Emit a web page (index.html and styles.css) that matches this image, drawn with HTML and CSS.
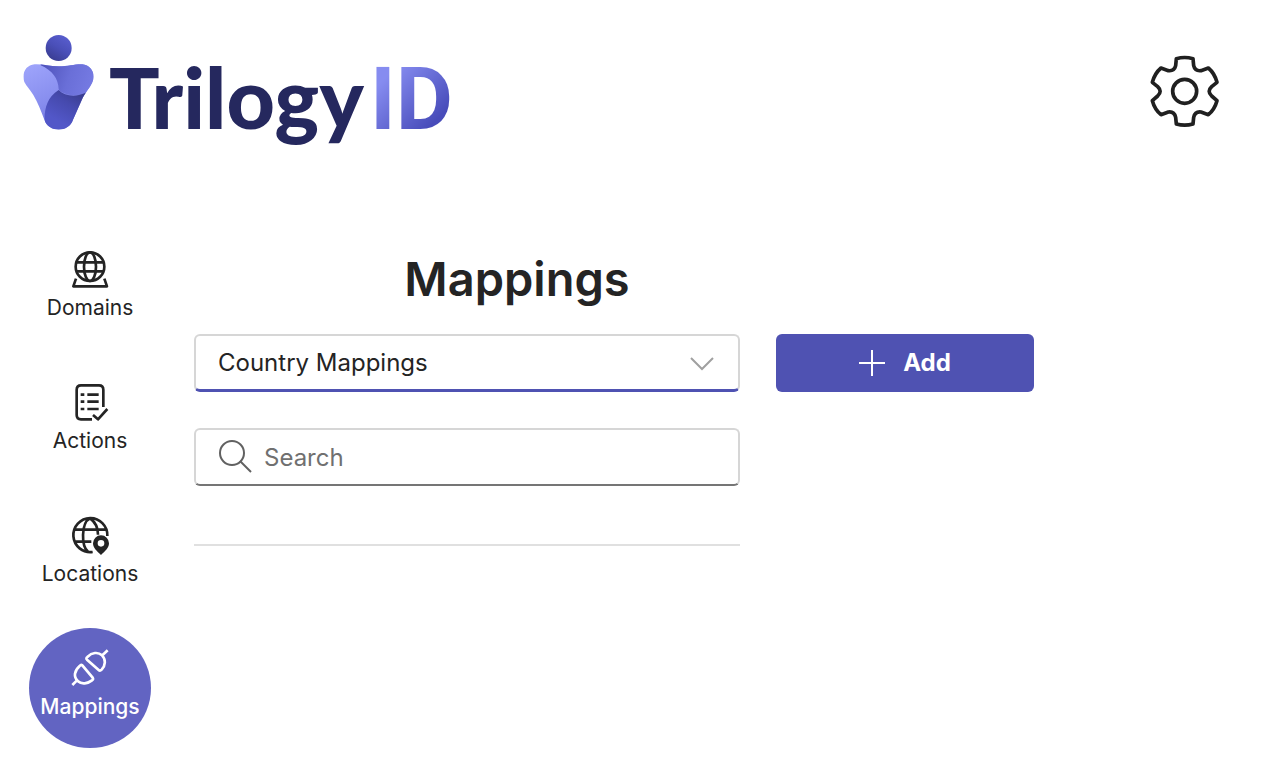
FILE: index.html
```html
<!DOCTYPE html>
<html lang="en">
<head>
<meta charset="utf-8">
<meta name="viewport" content="width=device-width, initial-scale=1">
<title>TrilogyID - Mappings</title>
<link rel="stylesheet" href="styles.css">
</head>
<body>
<header class="header">
  <a class="logo" href="#">
    <svg class="logo-mark" viewBox="36 25 219 297" aria-hidden="true">
      <defs>
        <linearGradient id="head" x1="0.8" y1="0" x2="0.2" y2="1"><stop offset="0" stop-color="#5a5fd0"/><stop offset="0.5" stop-color="#4a4fb8"/><stop offset="1" stop-color="#383b8e"/></linearGradient>
        <linearGradient id="left" x1="0.2" y1="0" x2="0.7" y2="1"><stop offset="0" stop-color="#9ea4fb"/><stop offset="0.5" stop-color="#878dee"/><stop offset="1" stop-color="#6468d4"/></linearGradient>
        <linearGradient id="right" x1="0" y1="0.4" x2="1" y2="0.6"><stop offset="0" stop-color="#5054bc"/><stop offset="0.5" stop-color="#6a6fd8"/><stop offset="1" stop-color="#777ce4"/></linearGradient>
        <linearGradient id="foot" x1="0.8" y1="0.1" x2="0.4" y2="0.8"><stop offset="0" stop-color="#363982"/><stop offset="0.5" stop-color="#464aae"/><stop offset="1" stop-color="#5257c8"/></linearGradient>
        <clipPath id="torso"><path d="M74 119C98 118 118 125 146 125C175 125 195 118 217 119C244 121 259 149 246 175C239 190 226 204 218 220L189 285C177 324 115 324 103 285C94 261 83 233 70 211C61 196 50 185 43 172C34 145 48 121 74 119Z"/></clipPath>
      </defs>
      <circle cx="146" cy="70" r="39" fill="url(#head)"/>
      <g clip-path="url(#torso)">
        <path d="M30 110H260V330H30Z" fill="url(#left)"/>
        <path d="M92 110H260V212H185C164 209 150 201 146 194C145 162 127 138 92 122Z" fill="url(#right)"/>
        <path d="M146 196C160 211 184 216 207 211C229 207 242 198 253 178V330H110C100 290 96 226 146 196Z" fill="url(#foot)"/>
      </g>
    </svg>
    <span class="logo-text">Trilogy<span class="logo-id">ID</span></span>
  </a>
  <button class="settings" type="button" aria-label="Settings">
    <svg viewBox="55 40 219 228" fill="none" stroke="#202020" stroke-width="11" stroke-linejoin="round" aria-hidden="true">
      <path d="M140 57Q165 50 190 57L192 78Q196 95 214 93L236 85Q255 101 262 128L246 141Q231 155 246 169L262 183Q255 209 236 225L214 217Q196 215 192 233L190 253Q165 260 140 253L138 233Q134 215 116 217L94 225Q75 209 68 183L84 169Q99 155 84 141L68 128Q75 101 94 85L116 93Q134 95 138 78Z"/>
      <circle cx="165" cy="155" r="36"/>
    </svg>
  </button>
</header>
<div class="layout">
  <nav class="nav" aria-label="Main">
    <a class="nav-item" href="#">
      <svg class="nav-icon" viewBox="150 45 120 120" aria-hidden="true"><circle cx="210" cy="95" r="43"/><ellipse cx="210" cy="95" rx="18" ry="43"/><path d="M170 82H250M170 109H250M168 131L160 154H261L253 131"/></svg>
      <span>Domains</span>
    </a>
    <a class="nav-item" href="#">
      <svg class="nav-icon" viewBox="150 39 120 120" aria-hidden="true"><path d="M216 148H183Q170 148 170 135V59Q170 46 183 46H237Q250 46 250 59V111M182 74H193M202 74H236M182 95H193M202 95H236M182 117H193M202 117H236M219 135L234 148L262 117"/></svg>
      <span>Actions</span>
    </a>
    <a class="nav-item" href="#">
      <svg class="nav-icon" viewBox="150 48 120 120" aria-hidden="true"><path d="M218 156A51 51 0 1 1 262 108M205 156C183 139 183 68 210 55C226 66 234 85 234 104M163 89H257M163 125H214"/><path class="pin" fill-rule="evenodd" d="M243 165C231 154 219 144 219 130A24 24 0 0 1 267 130C267 144 255 154 243 165ZM243 120A10 10 0 1 0 243 140A10 10 0 1 0 243 120Z"/></svg>
      <span>Locations</span>
    </a>
    <a class="nav-item nav-item-active" href="#" aria-current="page">
      <svg class="nav-icon" viewBox="150 87 120 120" aria-hidden="true"><path d="M157 195L171 181M187 136L218 173Q221 178 216 181C203 191 185 194 174 184C160 171 162 153 179 138Q183 133 187 136ZM202 111C216 97 234 95 246 106C258 118 257 136 245 149Q240 154 236 150L201 119Q197 115 202 111ZM248 105L263 91"/></svg>
      <span>Mappings</span>
    </a>
  </nav>
  <main class="content">
    <h1 class="title">Mappings</h1>
    <div class="field">
      <select class="control select" aria-label="Mapping type"><option>Country Mappings</option></select>
      <svg class="chevron" viewBox="0 0 24 14" aria-hidden="true"><path d="M1 1L12 12L23 1"/></svg>
    </div>
    <button class="add" type="button">
      <svg class="plus" viewBox="0 0 26 26" aria-hidden="true"><path d="M13 0V26M0 13H26"/></svg>
      Add
    </button>
    <div class="field">
      <svg class="search-icon" viewBox="0 0 34 34" aria-hidden="true"><circle cx="14" cy="14" r="12"/><path d="M22 22L33 33"/></svg>
      <input class="control search" type="search" placeholder="Search" aria-label="Search">
    </div>
    <hr class="divider">
  </main>
</div>
</body>
</html>
```
FILE: styles.css
```css
* { box-sizing: border-box; }
body { margin: 0; background: #fff; color: #242424; font-family: Inter, "Liberation Sans", sans-serif; }
.header { display: flex; justify-content: space-between; align-items: flex-start; height: 229px; padding: 33px 46px 0 22px; }
.logo { display: flex; gap: 14px; color: #25285e; text-decoration: none; }
.logo-mark { width: 73px; height: 99px; }
.logo-text { font: 900 84px/128px Lato, sans-serif; }
.logo-id { margin-left: 6px; font-family: Roboto, sans-serif; font-size: 88px; font-weight: 700; line-height: 1; color: transparent; background: linear-gradient(135deg, #868cf0 25%, #484cba 75%); -webkit-background-clip: text; background-clip: text; }
.settings { margin-top: 20px; padding: 0; border: 0; background: none; }
.settings svg { display: block; width: 73px; height: 76px; }
.layout { display: flex; }
.nav { display: flex; flex-direction: column; gap: 13px; padding: 0 43px 20px 29px; }
.nav-item { display: flex; flex-direction: column; align-items: center; gap: 3px; width: 122px; height: 120px; padding-top: 21px; border-radius: 50%; color: #242424; font-size: 21px; line-height: 30px; text-decoration: none; }
.nav-item-active { background: #6264c2; color: #fff; font-weight: 500; }
.nav-icon { width: 40px; height: 40px; fill: none; stroke: currentColor; stroke-width: 8; stroke-linejoin: round; }
.pin { fill: currentColor; stroke: none; }
.content { flex: 1; max-width: 840px; display: grid; grid-template-columns: 546fr 258fr; column-gap: 36px; align-content: start; padding-top: 20px; }
.title { grid-column: 1; margin: 0 0 25px; padding-left: 100px; text-align: center; font-size: 47px; line-height: 60px; font-weight: 600; }
.field { grid-column: 1; position: relative; margin-bottom: 36px; }
.control { display: block; width: 100%; height: 58px; border: 2px solid #d6d6d6; border-radius: 6px; background: #fff; color: #242424; font: 400 24px/30px Inter, sans-serif; outline: 0; }
.select { appearance: none; padding: 0 60px 0 22px; border-bottom: 3px solid #4f52b2; }
.chevron { position: absolute; right: 26px; top: 23px; width: 24px; height: 14px; fill: none; stroke: #a0a0a0; stroke-width: 2; pointer-events: none; }
.add { grid-column: 2; grid-row: 2; display: flex; align-items: center; justify-content: center; gap: 18px; height: 58px; border: 0; border-radius: 6px; background: #4f52b2; color: #fff; font: 700 24px/30px Inter, sans-serif; }
.title + .field { grid-row: 2; }
.plus { width: 26px; height: 26px; stroke: #fff; stroke-width: 2; }
.search { padding: 0 20px 0 68px; border-bottom-color: #757575; }
.search::placeholder { color: #707070; opacity: 1; }
.search-icon { position: absolute; left: 24px; top: 11px; width: 34px; height: 34px; fill: none; stroke: #616161; stroke-width: 2; }
.divider { grid-column: 1; width: 100%; height: 2px; margin: 22px 0 0; border: 0; background: #e0e0e0; }
```
